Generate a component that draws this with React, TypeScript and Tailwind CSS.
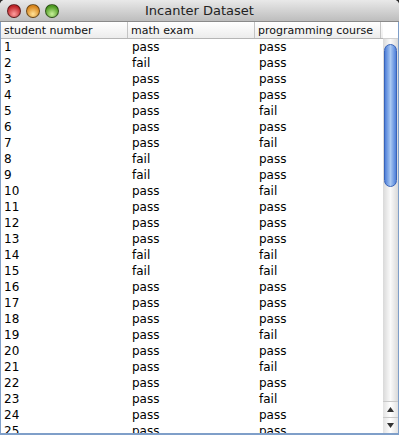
const rows: [string, string, string][] = [
  ["1", "pass", "pass"],
  ["2", "fail", "pass"],
  ["3", "pass", "pass"],
  ["4", "pass", "pass"],
  ["5", "pass", "fail"],
  ["6", "pass", "pass"],
  ["7", "pass", "fail"],
  ["8", "fail", "pass"],
  ["9", "fail", "pass"],
  ["10", "pass", "fail"],
  ["11", "pass", "pass"],
  ["12", "pass", "pass"],
  ["13", "pass", "pass"],
  ["14", "fail", "fail"],
  ["15", "fail", "fail"],
  ["16", "pass", "pass"],
  ["17", "pass", "pass"],
  ["18", "pass", "pass"],
  ["19", "pass", "fail"],
  ["20", "pass", "pass"],
  ["21", "pass", "fail"],
  ["22", "pass", "pass"],
  ["23", "pass", "fail"],
  ["24", "pass", "pass"],
  ["25", "pass", "pass"],
];

const Light = ({ from, to }: { from: string; to: string }) => (
  <div
    className="w-[14px] h-[14px] rounded-full border border-black/50"
    style={{ background: `radial-gradient(circle at 50% 75%, ${to} 0%, ${from} 70%)` }}
  />
);

export default function App() {
  return (
    <div className="w-[399px] h-[435px] bg-[#2a2a2a] overflow-hidden" style={{ fontFamily: '"DejaVu Sans", sans-serif' }}>
      <div className="w-full h-full flex flex-col rounded-t-[5px] overflow-hidden bg-white">
        {/* title bar */}
        <div className="h-[22px] flex items-center relative bg-gradient-to-b from-[#e9e9e9] to-[#bdbdbd] border-b border-[#8a8a8a]">
          <div className="flex gap-[5px] pl-[7px]">
            <Light from="#c0262a" to="#ff9e9e" />
            <Light from="#d9861c" to="#ffe39a" />
            <Light from="#4e9b22" to="#c8f09a" />
          </div>
          <div className="absolute inset-0 flex items-center justify-center text-[13px] text-[#222]">
            Incanter Dataset
          </div>
        </div>

        <div className="flex-1 flex border-l border-r border-b-[2px] border-[#7f9fc9] min-h-0">
          <div className="flex-1 flex flex-col min-w-0">
            {/* header */}
            <div className="flex h-[17px] text-[11px] text-[#111] bg-gradient-to-b from-white to-[#ececec] border-b border-[#b5b5b5] shrink-0">
              <div className="w-[127px] pl-[3px] border-r border-[#c4c4c4] leading-[17px]">student number</div>
              <div className="w-[127px] pl-[3px] border-r border-[#c4c4c4] leading-[17px]">math exam</div>
              <div className="w-[126px] pl-[3px] border-r border-[#c4c4c4] leading-[17px]">programming course</div>
            </div>
            <div className="flex-1 overflow-hidden text-[12px] text-black">
              {rows.map((r) => (
                <div key={r[0]} className="flex h-[16px] leading-[16px]">
                  <div className="w-[127px] pl-[3px]">{r[0]}</div>
                  <div className="w-[127px] pl-[4px]">{r[1]}</div>
                  <div className="w-[127px] pl-[4px]">{r[2]}</div>
                </div>
              ))}
            </div>
          </div>

          {/* scrollbar */}
          <div className="w-[15px] flex flex-col shrink-0">
            <div className="h-[17px] bg-white border-b border-[#d0d0d0]" />
            <div className="flex-1 flex flex-col px-[1px] pt-[5px] bg-gradient-to-r from-[#d9d9d9] via-[#fafafa] to-[#d9d9d9]">
              <div className="h-[143px] rounded-full border border-[#3a64b8] bg-gradient-to-r from-[#4f7fd8] via-[#a9c8f2] to-[#4f7fd8]" />
              <div className="flex-1" />
            </div>
            <div className="h-[16px] flex items-center justify-center bg-gradient-to-r from-[#e2e2e2] via-white to-[#e2e2e2] border-t border-[#c9c9c9]">
              <svg width="7" height="5" viewBox="0 0 7 5"><path d="M3.5 0L7 5H0z" fill="#333" /></svg>
            </div>
            <div className="h-[16px] flex items-center justify-center bg-gradient-to-r from-[#e2e2e2] via-white to-[#e2e2e2] border-t border-[#c9c9c9]">
              <svg width="7" height="5" viewBox="0 0 7 5"><path d="M0 0H7L3.5 5z" fill="#333" /></svg>
            </div>
          </div>
        </div>
      </div>
    </div>
  );
}
